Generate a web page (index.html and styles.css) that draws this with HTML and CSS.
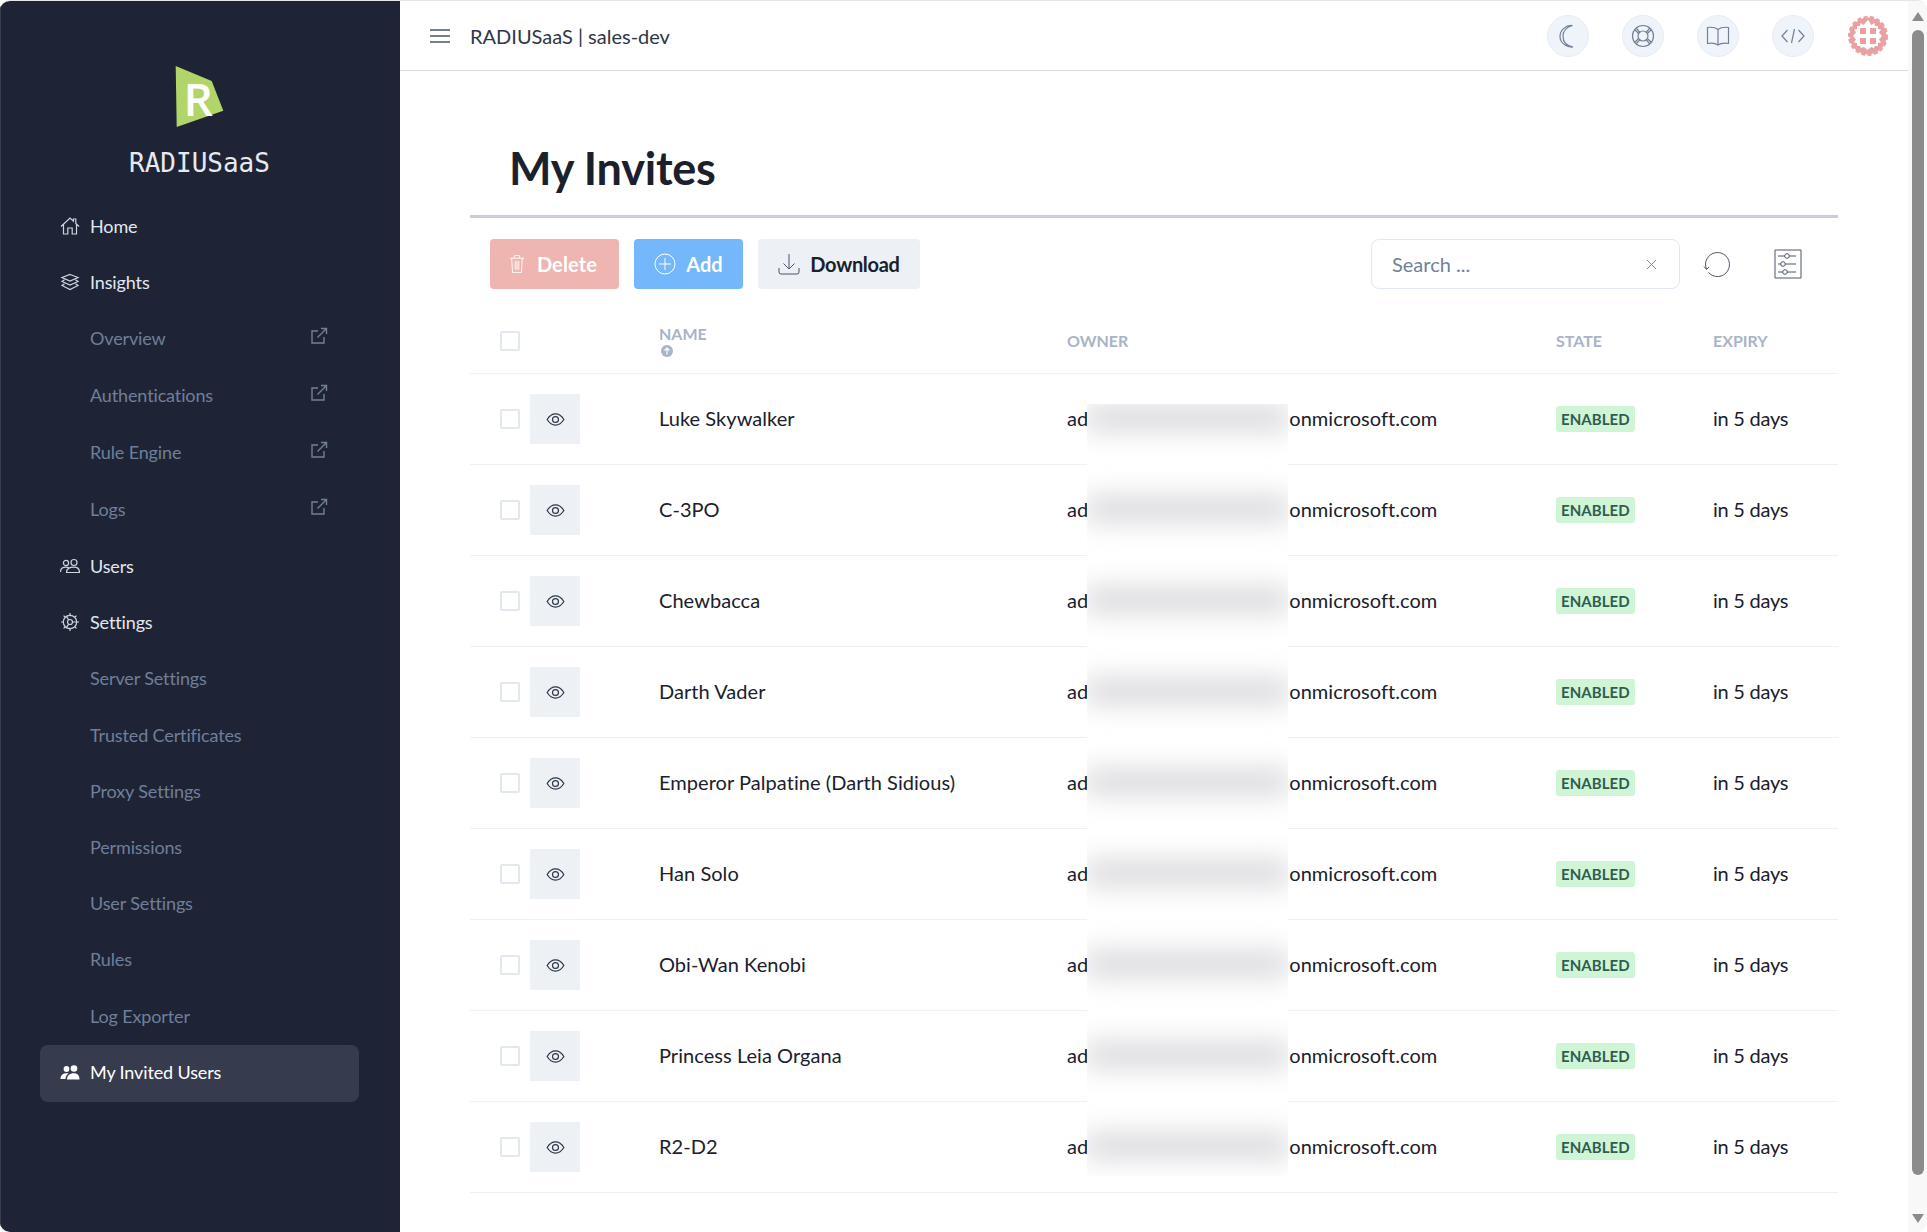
FILE: index.html
```html
<!DOCTYPE html>
<html lang="en">
<head>
    <meta charset="UTF-8">
    <meta name="viewport" content="width=device-width, initial-scale=1.0">
    <title>My Invites</title>
    <link rel="stylesheet" href="styles.css">
</head>
<body>
<div class="app">
    <aside class="sidebar">
        <div class="brand">
            <svg class="brand-mark" viewBox="0 0 50 62" width="50" height="62">
                <polygon points="0.7,0 36.7,15 48.3,44.7 1.7,61" fill="#b1d568"/>
                <text class="brand-r" x="8.500" y="50">R</text>
            </svg>
            <div class="brand-name">RADIUSaaS</div>
        </div>
        <nav class="nav">
            <a class="nav-item">
                <svg class="nav-icon" viewBox="0 0 20 20"><path d="M1 10.500 10 2l3.400 3.200V3h2.400v4.500L19 10.500M3.500 8.500V18h4.300v-6h4.400v6h4.300V8.500"/></svg>
                Home
            </a>
            <a class="nav-item">
                <svg class="nav-icon" viewBox="0 0 20 20"><path d="M10 2.500 18 5.500 10 9 2 5.500zM4.500 7.800 2 9.500 10 13 18 9.500 15.500 7.800M4.500 11.800 2 13.500 10 17.500 18 13.500 15.500 11.800"/></svg>
                Insights
            </a>
            <a class="nav-item sub ext">Overview
                <svg class="ext-icon" viewBox="0 0 18 18"><path d="M14 10v6H2V4h6M11 1.500h5.500V7M16.500 1.500 7.500 10.500"/></svg>
            </a>
            <a class="nav-item sub ext">Authentications
                <svg class="ext-icon" viewBox="0 0 18 18"><path d="M14 10v6H2V4h6M11 1.500h5.500V7M16.500 1.500 7.500 10.500"/></svg>
            </a>
            <a class="nav-item sub ext">Rule Engine
                <svg class="ext-icon" viewBox="0 0 18 18"><path d="M14 10v6H2V4h6M11 1.500h5.500V7M16.500 1.500 7.500 10.500"/></svg>
            </a>
            <a class="nav-item sub ext">Logs
                <svg class="ext-icon" viewBox="0 0 18 18"><path d="M14 10v6H2V4h6M11 1.500h5.500V7M16.500 1.500 7.500 10.500"/></svg>
            </a>
            <a class="nav-item">
                <svg class="nav-icon" viewBox="0 0 20 20"><circle cx="6" cy="7" r="2.600"/><circle cx="14" cy="6.500" r="3"/><path d="M.5 16c0-3.300 2.500-4.800 5.500-4.800 1 0 2 .2 2.800.6M6.500 16.500c0-3.500 3.200-5.300 7.500-5.300s5.500 2 5.500 5.300z"/></svg>
                Users
            </a>
            <a class="nav-item">
                <svg class="nav-icon" viewBox="0 0 20 20"><circle cx="10" cy="10" r="6.700"/><circle cx="10" cy="10" r="2.500"/><path d="M10 1v2M10 17v2M1 10h2M17 10h2M3.600 3.600 5 5M15 15l1.400 1.400M16.400 3.600 15 5M5 15l-1.400 1.400M12.500 10h4M8.700 7.800 6 3.800M8.700 12.200 6 16.200"/></svg>
                Settings
            </a>
            <a class="nav-item sub">Server Settings</a>
            <a class="nav-item sub">Trusted Certificates</a>
            <a class="nav-item sub">Proxy Settings</a>
            <a class="nav-item sub">Permissions</a>
            <a class="nav-item sub">User Settings</a>
            <a class="nav-item sub">Rules</a>
            <a class="nav-item sub">Log Exporter</a>
            <a class="nav-item active">
                <svg class="nav-icon solid" viewBox="0 0 20 20"><circle cx="6.500" cy="6" r="2.900"/><circle cx="14" cy="5.500" r="3.300"/><path d="M.5 16c0-3.800 2.500-5.800 6-5.800.8 0 1.500.1 2.100.3C6.600 11.700 5.600 13.500 5.500 16zM7 16.500c0-4 2.700-6.300 6.800-6.300 4.200 0 5.700 2.500 5.700 6.300z"/></svg>
                My Invited Users
            </a>
        </nav>
    </aside>

    <div class="main">
        <header class="topbar">
            <svg class="burger" viewBox="0 0 20 14" width="20" height="14"><path d="M0 1h20M0 7h20M0 13h20"/></svg>
            <div class="topbar-title">RADIUSaaS | sales-dev</div>
            <div class="topbar-actions">
                <span class="round-btn">
                    <svg viewBox="0 0 24 24"><path d="M16.500 1.500C11 3 7 7 7 12.500s4 9.300 10 10.500C12 23.500 4 20 4 12.500 4 6 10 1 16.500 1.500z"/></svg>
                </span>
                <span class="round-btn">
                    <svg viewBox="0 0 24 24"><circle cx="12" cy="12" r="10.500"/><circle cx="12" cy="12" r="5"/><path d="M5 3.800l4 4.700M3.500 5.500l4.200 4M19 3.800l-4 4.700M20.500 5.500l-4.200 4M5 20.200l4-4.700M3.500 18.500l4.200-4M19 20.200l-4-4.700M20.500 18.500l-4.200-4"/></svg>
                </span>
                <span class="round-btn">
                    <svg viewBox="0 0 24 24"><path d="M12 5.500C9.500 3.500 5 3 1.500 3.500v16c3.500-.5 8-.2 10.500 1.500 2.500-1.700 7-2 10.500-1.500v-16C19 3 14.500 3.500 12 5.500zM12 5.500V21"/></svg>
                </span>
                <span class="round-btn">
                    <svg viewBox="0 0 24 24"><path d="M6.500 6 1 12l5.500 6M17.500 6 23 12l-5.500 6M13.500 5l-3 14"/></svg>
                </span>
                <svg class="avatar" viewBox="0 0 40 40" width="40" height="40">
                    <circle cx="20" cy="20" r="18.500" fill="#e8a0a0"/>
                    <circle cx="20" cy="20" r="19" fill="none" stroke="#e8a0a0" stroke-width="2" stroke-dasharray="4 2.500"/>
                    <path fill="#fff" d="M20 4l3.500 5 3-2 .5 3h3v3l3 .5-2 3 3 3.500-3 3.500 2 3-3 .5v3h-3l-1 2-3-1-3.500 3-3.500-3-3 1-1-2h-3v-3l-3-.5 2-3-3-3.500 3-3.500-2-3 3-.5v-3h3l.5-3 3 2z"/>
                    <path fill="#e8a0a0" d="M12 12h6v6h-6zM22 12h6v6h-6zM12 22h6v6h-6zM22 22h6v6h-6z"/>
                </svg>
            </div>
        </header>

        <section class="content">
            <h1 class="page-title">My Invites</h1>

            <div class="toolbar">
                <div class="toolbar-buttons">
                    <button class="btn btn-delete">
                        <svg viewBox="0 0 18 22" width="16" height="20"><path d="M1 4.500h16M6 4.500V1.500h6v3M3 4.500l1 16h10l1-16M7 7.500v10M9 7.500v10M11 7.500v10"/></svg>
                        Delete
                    </button>
                    <button class="btn btn-add">
                        <svg viewBox="0 0 22 22" width="22" height="22"><circle cx="11" cy="11" r="10"/><path d="M11 5v12M5 11h12"/></svg>
                        Add
                    </button>
                    <button class="btn btn-download">
                        <svg viewBox="0 0 22 22" width="22" height="22"><path d="M11 1v15M5.500 10.500 11 16l5.500-5.500M1 15v4q0 2 2 2h16q2 0 2-2v-4"/></svg>
                        Download
                    </button>
                </div>
                <div class="toolbar-right">
                    <div class="search">
                        <input class="search-input" type="text" placeholder="Search ...">
                        <svg class="search-clear" viewBox="0 0 12 12" width="11" height="11"><path d="M1 1l10 10M11 1 1 11"/></svg>
                    </div>
                    <span class="tool-icon">
                        <svg viewBox="0 0 28 28" width="28" height="28"><path d="M5.500 22.500A12 12 0 1 0 2.500 14c0 1.500.2 3 .9 5M1 16.500l2.500 3 2.500-2.500"/></svg>
                    </span>
                    <span class="tool-icon">
                        <svg viewBox="0 0 28 30" width="28" height="30"><path d="M1 1h26v28H1zM4 7h18M4 15h18M4 23h18"/><circle class="knob" cx="13" cy="7" r="2.300"/><circle class="knob" cx="9" cy="15" r="2.300"/><circle class="knob" cx="11" cy="23" r="2.300"/></svg>
                    </span>
                </div>
            </div>

            <div class="table-wrap">
                <table class="invites">
                    <colgroup>
                        <col class="col-select"><col class="col-name"><col class="col-owner"><col class="col-state"><col class="col-expiry">
                    </colgroup>
                    <thead>
                        <tr>
                            <th class="select-cell"><span class="check"></span></th>
                            <th>
                                <div class="th-sorted">NAME</div>
                                <svg class="sort-icon" viewBox="0 0 12 12" width="12" height="12"><circle cx="6" cy="6" r="6"/><path d="M6 9.500V3M3.500 5.500 6 3l2.500 2.500"/></svg>
                            </th>
                            <th>OWNER</th>
                            <th>STATE</th>
                            <th>EXPIRY</th>
                        </tr>
                    </thead>
                    <tbody id="rows"></tbody>
                </table>
                <div class="redact" id="redact"></div>
            </div>
        </section>
    </div>

    <div class="scrollbar">
        <span class="arrow-up"></span>
        <span class="thumb"></span>
        <span class="arrow-down"></span>
    </div>
</div>

<script>
    const names = ['Luke Skywalker', 'C-3PO', 'Chewbacca', 'Darth Vader', 'Emperor Palpatine (Darth Sidious)',
        'Han Solo', 'Obi-Wan Kenobi', 'Princess Leia Organa', 'R2-D2'];

    const eye = '<svg viewBox="0 0 20 14" width="19" height="13"><path d="M1 7c2.500-4 5.500-6 9-6s6.500 2 9 6c-2.500 4-5.500 6-9 6s-6.500-2-9-6z"/><circle cx="10" cy="7" r="3.200"/></svg>';

    document.getElementById('rows').innerHTML = names.map((name) => `
        <tr>
            <td class="select-cell"><span class="check"></span><span class="eye-btn">${eye}</span></td>
            <td>${name}</td>
            <td>ad<span class="owner-gap"></span>onmicrosoft.com</td>
            <td class="state-cell"><span class="badge">ENABLED</span></td>
            <td class="expiry-cell">in 5 days</td>
        </tr>`).join('');

    document.getElementById('redact').innerHTML = names.map(() => '<span class="redact-bar"></span>').join('');
</script>
</body>
</html>
```

FILE: styles.css
```css
* {
    box-sizing: border-box;
}

html, body {
    margin: 0;
    height: 100%;
    background-color: #ffffff;
}

body {
    font-family: 'Lato', 'Liberation Sans', sans-serif;
    color: #1a202c;
    overflow: hidden;
}

.app {
    display: flex;
    height: 1232px;
    border-top: 1px solid #e6e6e6;
    border-radius: 10px;
    overflow: hidden;
}

/* sidebar */
.sidebar {
    flex: 0 0 400px;
    background-color: #1e2435;
    border-left: 1px solid #3a3f4d;
    padding-left: 39px;
    padding-right: 41px;
}

.brand {
    display: flex;
    flex-direction: column;
    align-items: center;
    padding-top: 65px;
    height: 196.600px;
}

.brand-mark {
    display: block;
}

.brand-r {
    font-family: 'Open Sans', sans-serif;
    font-weight: 600;
    font-size: 46px;
    fill: #ffffff;
}

.brand-name {
    font-family: 'DejaVu Sans Mono', monospace;
    color: #e6e9ef;
    font-size: 26px;
    line-height: 36px;
    margin-top: 17px;
}

.nav-item {
    display: flex;
    align-items: center;
    height: 56.200px;
    padding: 0 31px 0 50px;
    font-size: 18px;
    letter-spacing: -0.13px;
    color: #e2e8f0;
    border-radius: 8px;
    position: relative;
}

.nav-item.sub {
    color: #6f7f9b;
}

.nav-item.ext {
    height: 57px;
    justify-content: space-between;
}

.nav-item.active {
    height: 57px;
    margin-top: 1px;
    padding-bottom: 2px;
    background-color: #363b4d;
    color: #ffffff;
}

.nav-icon {
    position: absolute;
    left: 20px;
    top: 50%;
    width: 20px;
    height: 20px;
    margin-top: -10px;
    fill: none;
    stroke: #cbd5e0;
    stroke-width: 1.2;
}

.nav-icon.solid {
    fill: #ffffff;
    stroke: none;
}

.ext-icon {
    width: 18px;
    height: 18px;
    margin-top: -5px;
    fill: none;
    stroke: #718096;
    stroke-width: 1.4;
}

/* main column */
.main {
    flex: 1;
    min-width: 0;
    background-color: #ffffff;
}

.topbar {
    display: flex;
    align-items: center;
    height: 70px;
    padding-left: 30px;
    padding-right: 20px;
    border-bottom: 1px solid #dcdde0;
}

.burger {
    fill: none;
    stroke: #4a5568;
    stroke-width: 1.3;
}

.topbar-title {
    margin-left: 20px;
    font-size: 20px;
    color: #2d3748;
}

.topbar-actions {
    display: flex;
    align-items: center;
    gap: 33px;
    margin-left: auto;
}

.round-btn {
    display: flex;
    align-items: center;
    justify-content: center;
    width: 42px;
    height: 42px;
    background-color: #eff3fa;
    border: 1px solid #e8ecf3;
    border-radius: 50%;
}

.round-btn svg {
    width: 24px;
    height: 24px;
    fill: none;
    stroke: #718096;
    stroke-width: 1.2;
}

.avatar {
    margin-left: 1px;
}

.content {
    padding: 0 70px;
}

.page-title {
    margin: 0;
    height: 147px;
    padding: 68px 0 0 39px;
    font-size: 45px;
    font-weight: 700;
    line-height: 58px;
    letter-spacing: -0.25px;
    border-bottom: 3px solid #c8cdd9;
}

.toolbar {
    display: flex;
    justify-content: space-between;
    align-items: center;
    margin-top: 21px;
    padding: 0 30px 0 20px;
}

.toolbar-buttons {
    display: flex;
    gap: 15px;
}

.btn {
    display: flex;
    align-items: center;
    justify-content: center;
    gap: 10px;
    height: 50px;
    border: none;
    border-radius: 4px;
    font-family: inherit;
    font-size: 20px;
    font-weight: 700;
    color: #ffffff;
}

.btn svg {
    fill: none;
    stroke: currentColor;
    stroke-width: 1;
}

.btn-delete {
    width: 129px;
    gap: 12px;
    padding-left: 3px;
    background-color: #eeb5b1;
    letter-spacing: 0.15px;
}

.btn-add {
    width: 109px;
    background-color: #74b7fb;
}

.btn-download {
    width: 162px;
    background-color: #edf0f5;
    color: #1a202c;
    letter-spacing: -0.3px;
}

.btn-download svg {
    stroke: #4a5568;
}

.toolbar-right {
    display: flex;
    align-items: center;
    gap: 31px;
}

.search {
    display: flex;
    align-items: center;
    width: 309px;
    height: 50px;
    margin-right: -14px;
    padding: 0 22px 0 20px;
    border: 1px solid #e2e8f0;
    border-radius: 8px;
}

.search-input {
    flex: 1;
    min-width: 0;
    padding: 0;
    border: none;
    outline: none;
    font-family: inherit;
    font-size: 20px;
    color: #2d3748;
}

.search-input::placeholder {
    color: #718096;
}

.search-clear {
    fill: none;
    stroke: #718096;
    stroke-width: 1;
}

.tool-icon {
    display: flex;
    align-items: center;
    justify-content: center;
    width: 40px;
    height: 40px;
}

.tool-icon svg {
    fill: none;
    stroke: #4a5568;
    stroke-width: 1;
}

.tool-icon .knob {
    fill: #ffffff;
}

/* table */
.table-wrap {
    position: relative;
}

.invites {
    width: 100%;
    table-layout: fixed;
    border-collapse: collapse;
}

.col-select { width: 189px; }
.col-name { width: 408px; }
.col-owner { width: 489px; }
.col-state { width: 157px; }
.col-expiry { width: 125px; }

.invites th {
    height: 84px;
    padding: 21px 0 0;
    border-bottom: 1px solid #edf0f5;
    color: #a9b4c6;
    font-size: 16px;
    font-weight: 700;
    line-height: 20px;
    text-align: left;
}

.th-sorted {
    margin-top: -1px;
    margin-bottom: 1px;
}

.invites td {
    height: 91px;
    padding: 0 0 2px;
    border-bottom: 1px solid #edf0f5;
    font-size: 20px;
    letter-spacing: 0.05px;
}

.invites td.select-cell {
    padding: 0 0 0 30px;
    white-space: nowrap;
}

.invites th.select-cell {
    padding: 19px 0 0 30px;
}

.invites td.state-cell {
    padding: 0;
}

.invites td.expiry-cell {
    letter-spacing: -0.25px;
}

.check {
    display: inline-block;
    width: 20px;
    height: 20px;
    border: 2px solid #e2e8f0;
    border-radius: 2px;
    vertical-align: middle;
}

.eye-btn {
    display: inline-flex;
    align-items: center;
    justify-content: center;
    width: 50px;
    height: 50px;
    margin-left: 10px;
    background-color: #edf0f5;
    vertical-align: middle;
}

.eye-btn svg {
    margin-top: 1px;
    fill: none;
    stroke: #2d3748;
    stroke-width: 1.3;
}

.sort-icon {
    display: block;
    margin-left: 2px;
    fill: #a9b4c6;
}

.sort-icon path {
    fill: none;
    stroke: #ffffff;
    stroke-width: 1.2;
}

.owner-gap {
    display: inline-block;
    width: 201px;
}

.badge {
    display: inline-block;
    padding: 0 5px;
    height: 26px;
    line-height: 26px;
    background-color: #d0f5d6;
    border-radius: 3px;
    color: #2f5d50;
    font-size: 15px;
    font-weight: 700;
}

/* blurred-out owner addresses */
.redact {
    position: absolute;
    left: 617px;
    top: 115px;
    width: 201px;
    height: 772px;
    display: flex;
    flex-direction: column;
    gap: 67px;
    padding: 2px 0 0;
    background-color: #ffffff;
    overflow: hidden;
}

.redact-bar {
    flex: 0 0 24px;
    margin: 0 -2px;
    background-color: #d4d5d8;
    filter: blur(14px);
}

/* window scrollbar */
.scrollbar {
    flex: 0 0 19px;
    display: flex;
    flex-direction: column;
    align-items: center;
    background-color: #f8f8f8;
    padding: 11px 3px 8px 4px;
}

.arrow-up, .arrow-down {
    width: 0;
    height: 0;
    border-left: 6.500px solid transparent;
    border-right: 6.500px solid transparent;
}

.arrow-up {
    border-bottom: 9px solid #8b8b8b;
}

.arrow-down {
    border-top: 9px solid #8b8b8b;
    margin-top: 39px;
}

.thumb {
    width: 12px;
    height: 1145px;
    margin-top: 9px;
    background-color: #8b8b8b;
    border-radius: 6px;
}
```
